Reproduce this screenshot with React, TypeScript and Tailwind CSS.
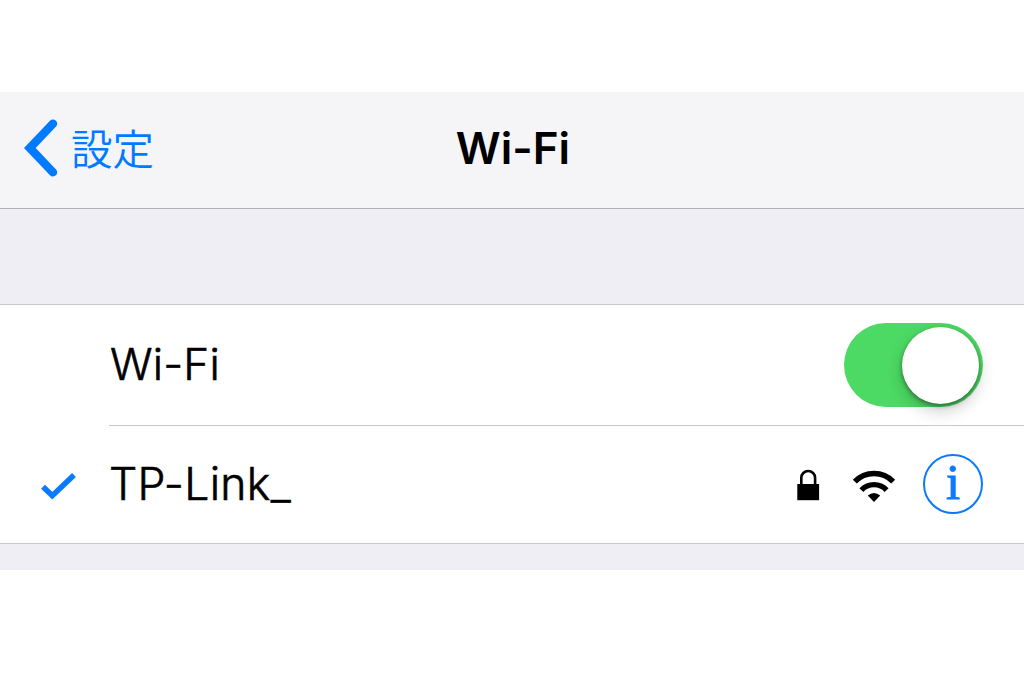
import { useState } from 'react';

const NETWORKS = [{ id: 1, name: 'TP-Link_', connected: true, secured: true }];

function ChevronIcon() {
  return (
    <svg className="w-[36px] h-[60px]" viewBox="0 0 36 60" fill="none" stroke="#007aff" strokeWidth="8.4" strokeLinecap="round">
      <path d="M31 5.7 L7.8 30 L31 54.3" />
    </svg>
  );
}

function CheckIcon() {
  return (
    <svg className="w-[36px] h-[28px]" viewBox="0 0 36 28" fill="none" stroke="#0a7aff" strokeWidth="5.6">
      <path d="M3 14.7 L12.3 23.7 L34 2.9" />
    </svg>
  );
}

function LockIcon() {
  return (
    <svg className="w-[24px] h-[32px]" viewBox="0 0 24 32">
      <path d="M5.3 16 V8.9 a6.9 6.9 0 0 1 13.8 0 V16" fill="none" stroke="#000" strokeWidth="2.6" />
      <rect x="1.3" y="15" width="21.8" height="16.2" fill="#000" />
    </svg>
  );
}

function WifiIcon() {
  return (
    <svg className="w-[44px] h-[32px]" viewBox="0 0 44 32" fill="none">
      <path d="M2.8 11.6 A26.6 26.6 0 0 1 41.2 11.6" stroke="#000" strokeWidth="5.5" />
      <path d="M9.4 20.1 A17.3 17.3 0 0 1 34.6 20.1" stroke="#000" strokeWidth="5.4" />
      <path d="M15.8 25.6 Q22 20.4 28.2 25.6 L22 31.9 Z" fill="#000" />
    </svg>
  );
}

export default function App() {
  const [enabled, setEnabled] = useState(true);

  return (
    <div className="h-[675px] w-[1024px] overflow-hidden bg-white pt-[92px] font-['Inter','Noto_Sans_CJK_JP',sans-serif] text-black">
      <header className="grid h-[117px] grid-cols-3 items-center border-b border-[#b0b0b4] bg-[#f5f5f8]">
        <button className="flex items-center pb-[4px] pl-[22px] text-[#007aff]">
          <ChevronIcon />
          <span className="ml-[13px] pb-[3px] font-['Noto_Sans_CJK_JP',sans-serif] text-[41.5px] leading-[60px] font-[350]">設定</span>
        </button>
        <h1 className="pr-px pb-[4px] pl-[3px] text-center text-[44px] leading-[60px] font-semibold">Wi-Fi</h1>
      </header>

      <div className="h-[95px] bg-[#efeef5]"></div>

      <main className="border-y border-[#c8c7cc] bg-white">
        <div className="ml-[109px] flex h-[121px] items-center justify-between border-b border-[#c8c7cc] pr-[41px]">
          <span className="pb-[3px] pl-px text-[44px] leading-[60px] font-light tracking-[0.2px] [-webkit-text-stroke:0.6px_#000]">Wi-Fi</span>
          <button
            role="switch"
            aria-checked={enabled}
            onClick={() => setEnabled(!enabled)}
            className={`flex h-[84px] w-[139px] items-center rounded-full px-[4px] ${
              enabled ? 'justify-end bg-[#4cd964]' : 'justify-start bg-[#e5e5ea]'
            }`}
          >
            <span className="size-[77px] rounded-full bg-white shadow-[0_7px_16px_rgba(0,0,0,0.2),0_2px_4px_rgba(0,0,0,0.4)]"></span>
          </button>
        </div>

        {NETWORKS.map(network => (
          <div key={network.id} className="flex h-[117px] items-center pr-[41px]">
            <div className="flex w-[109px] pt-[3px] pl-[40px]">{network.connected && <CheckIcon />}</div>
            <span className="flex-1 pb-[2px] text-[44.5px] leading-[60px] font-light tracking-[0.3px] [-webkit-text-stroke:0.6px_#000]">
              {network.name}
            </span>
            <div className="flex items-center pb-[2px]">
              <span className="pt-[3px]">{network.secured && <LockIcon />}</span>
              <span className="ml-[32px] pt-[4px]">
                <WifiIcon />
              </span>
              <button className="ml-[27px] flex size-[60px] items-center justify-center rounded-full border-2 border-[#0a7aff] pb-[4px] font-['Liberation_Serif',serif] text-[51px] leading-[52px] text-[#0a7aff] [-webkit-text-stroke:0.9px_#0a7aff]">
                i
              </button>
            </div>
          </div>
        ))}
      </main>

      <div className="h-[26px] bg-[#efeef5]"></div>
    </div>
  );
}
